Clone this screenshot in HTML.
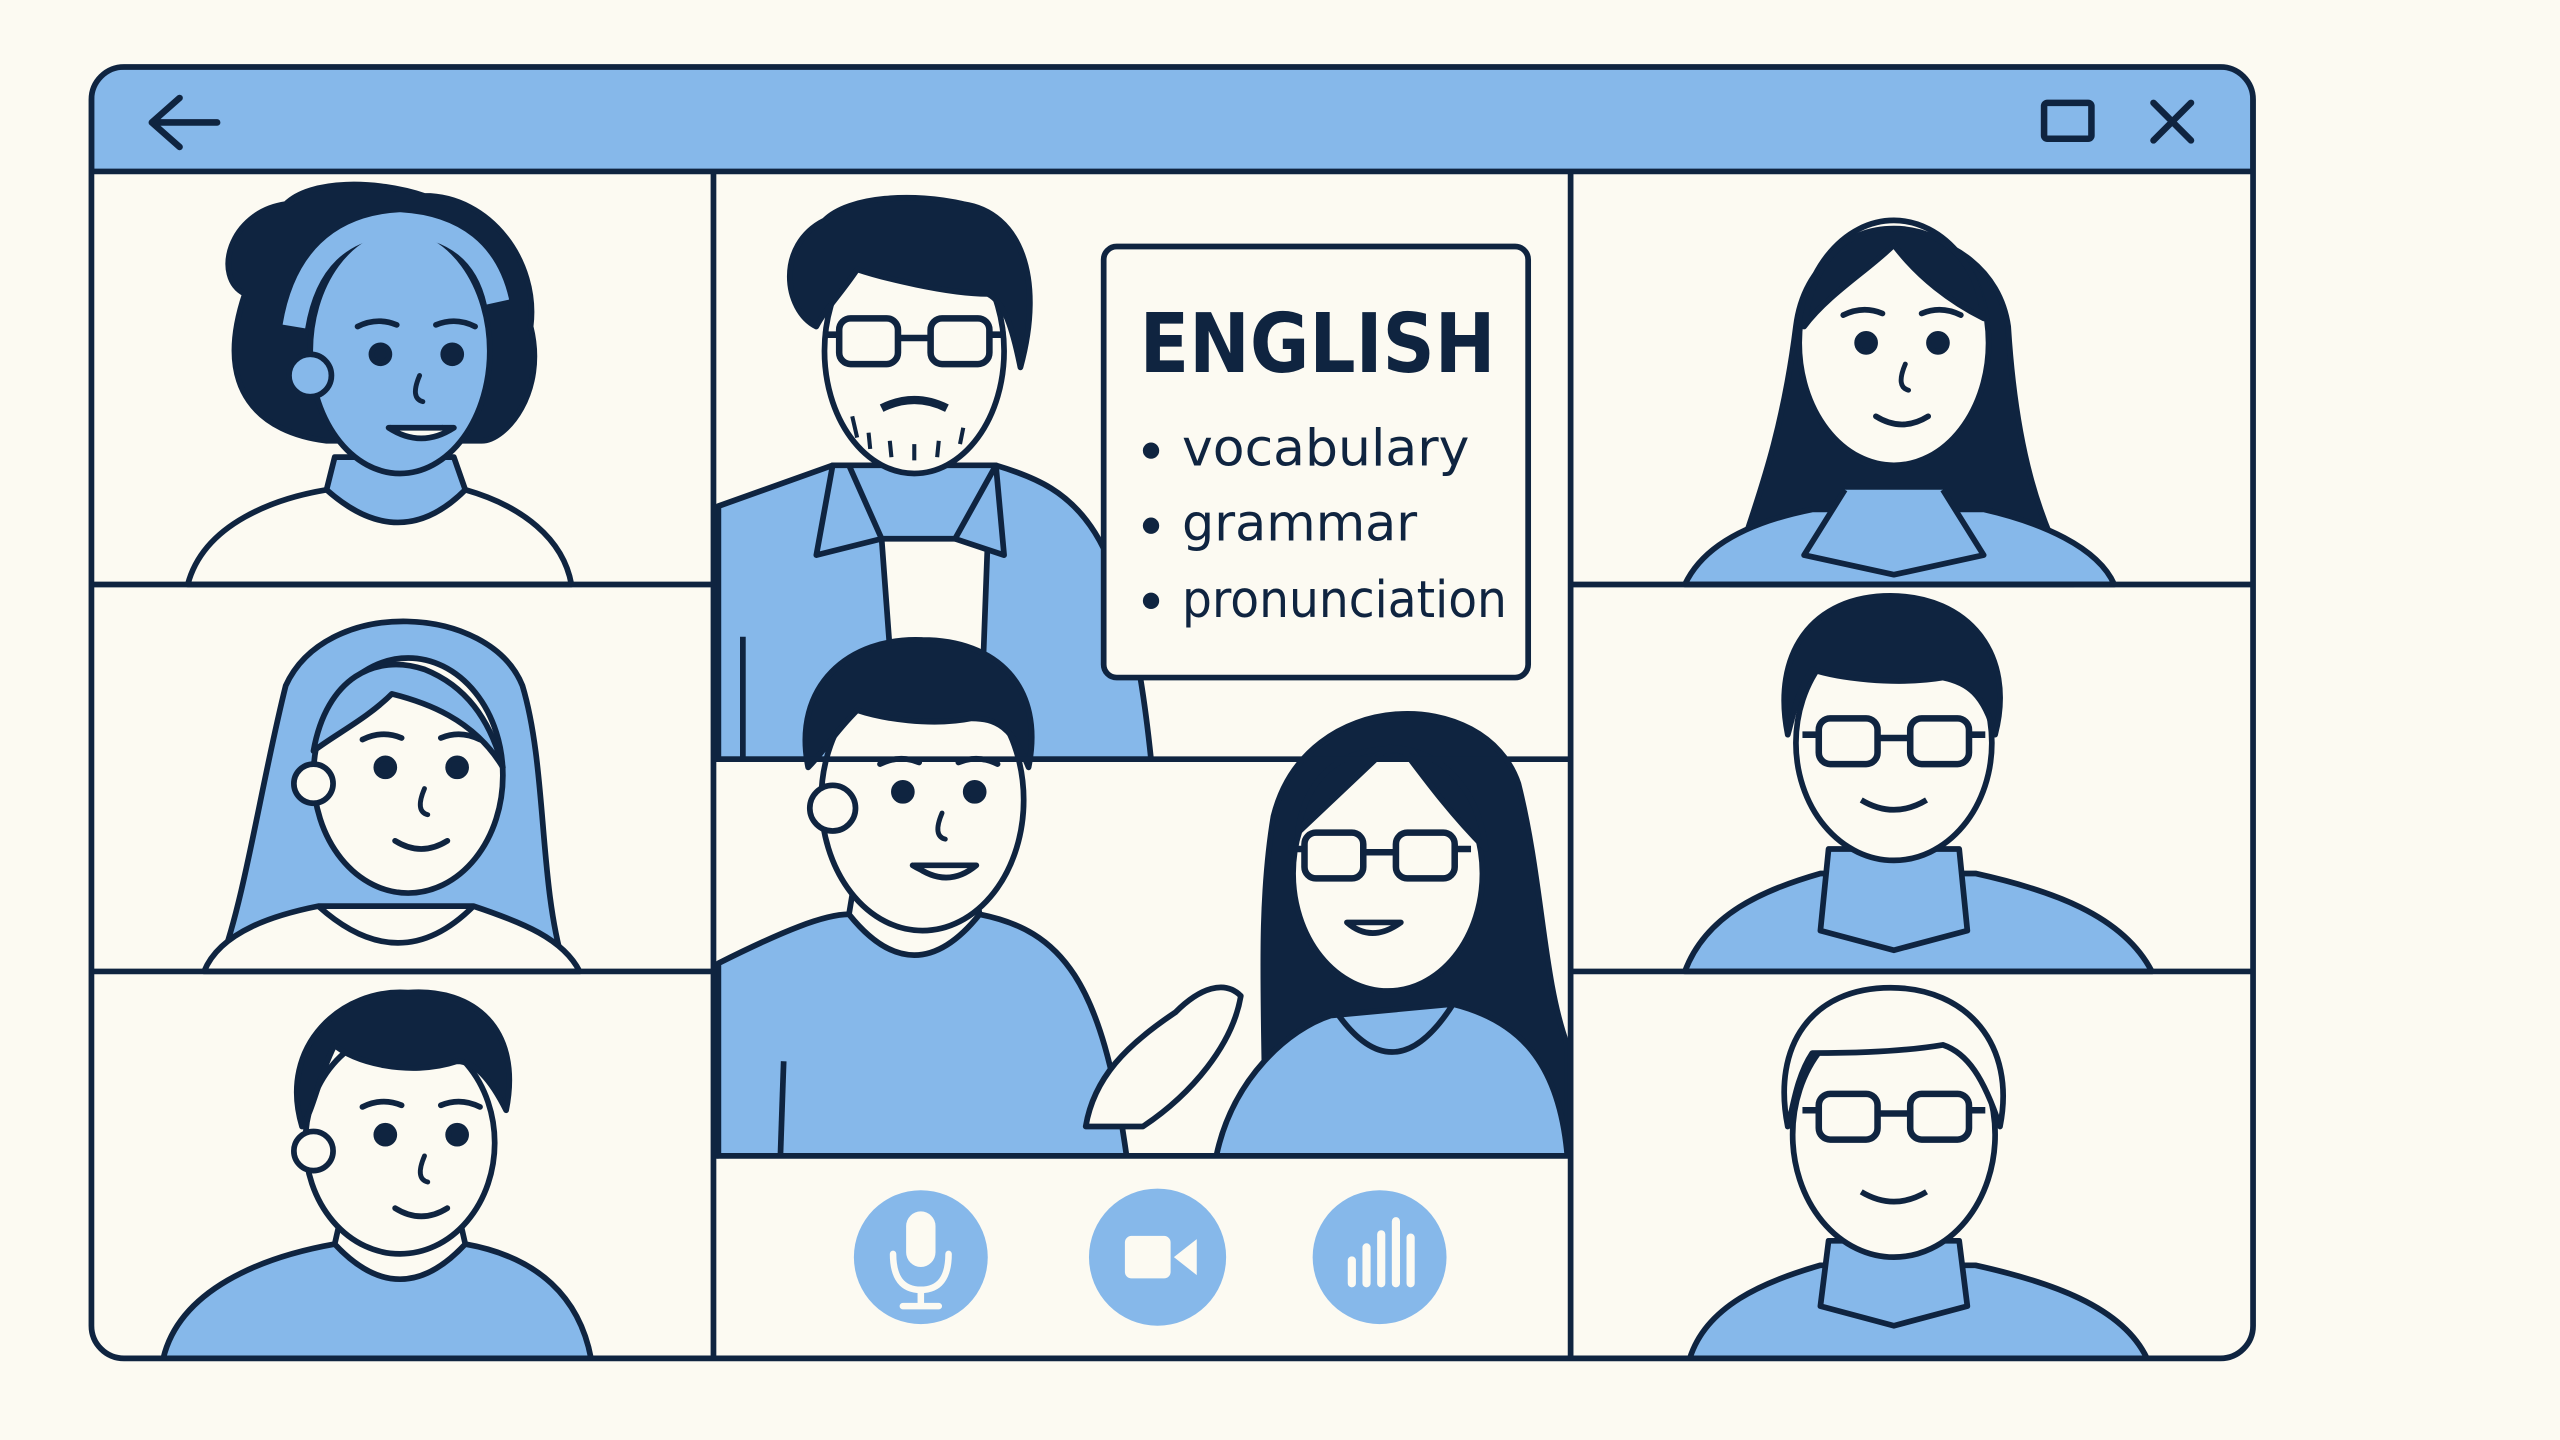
<!DOCTYPE html>
<html><head><meta charset="utf-8"><style>
html,body{margin:0;padding:0;background:#fcfaf2;}
svg{display:block;}
</style></head><body>
<svg width="2560" height="1440" viewBox="0 0 1568 882" xmlns="http://www.w3.org/2000/svg">
<defs>
<clipPath id="win"><rect x="56" y="41" width="1324" height="791" rx="20"/></clipPath>
<g id="face">
  <circle cx="-22" cy="-5" r="5.5" fill="#0f2440"/>
  <circle cx="22" cy="-5" r="5.5" fill="#0f2440"/>
  <path d="M-36 -22 Q-24 -28 -12 -23 M12 -23 Q24 -28 36 -22" stroke="#0f2440" stroke-width="3.5" fill="none" stroke-linecap="round"/>
  <path d="M2 8 Q-4 22 4 24" stroke="#0f2440" stroke-width="3" fill="none" stroke-linecap="round"/>
  <path d="M-16 40 Q0 50 16 40" stroke="#0f2440" stroke-width="3.5" fill="none" stroke-linecap="round"/>
</g>
<g id="glasses" fill="none" stroke="#0f2440" stroke-width="4">
  <rect x="-46" y="-20" width="36" height="28" rx="7"/>
  <rect x="10" y="-20" width="36" height="28" rx="7"/>
  <path d="M-10 -8 H10 M-46 -10 H-56 M46 -10 H56"/>
</g>
</defs>
<rect width="1568" height="882" fill="#fcfaf2"/>
<g clip-path="url(#win)" stroke="#0f2440" stroke-width="3.5" stroke-linejoin="round">
<rect x="56" y="41" width="1324" height="791" fill="#fcfaf2" stroke="none"/>

<!-- L1 woman curly -->
<path d="M115 358 C125 320 170 305 200 300 L285 300 C320 310 345 330 350 358 Z" fill="#fcfaf2"/>
<path d="M200 300 Q245 340 285 300 L278 280 L205 280 Z" fill="#86b8ea"/>
<path d="M150 180 C130 170 140 130 175 125 C190 110 230 110 260 120 C300 120 330 160 325 200 C335 240 310 270 295 270 L200 270 C160 265 130 240 150 180 Z" fill="#0f2440"/>
<ellipse cx="245" cy="215" rx="55" ry="75" fill="#86b8ea"/>
<path d="M180 200 Q190 140 245 137 Q295 140 305 185" fill="none" stroke="#86b8ea" stroke-width="14"/>
<circle cx="190" cy="230" r="13" fill="#86b8ea"/>
<use href="#face" x="255" y="222"/>
<path d="M238 262 Q258 275 278 262 Z" fill="#fcfaf2"/>

<!-- L2 woman blue hair -->
<path d="M175 420 C160 480 150 550 135 590 L205 590 L300 590 L345 590 C330 540 335 470 320 420 C300 370 200 365 175 420 Z" fill="#86b8ea"/>
<path d="M125 595 C135 570 170 560 195 555 L290 555 C320 565 345 575 355 595 Z" fill="#fcfaf2"/>
<path d="M195 555 Q245 600 290 555" fill="none"/>
<ellipse cx="250" cy="475" rx="58" ry="72" fill="#fcfaf2"/>
<path d="M192 460 C200 415 230 400 260 410 C285 420 300 440 308 470 C290 440 260 430 240 425 C225 440 205 450 192 460 Z" fill="#86b8ea"/>
<circle cx="192" cy="480" r="12" fill="#fcfaf2"/>
<use href="#face" x="258" y="475"/>

<!-- L3 boy -->
<path d="M100 832 C110 790 160 770 205 762 L285 762 C330 770 355 795 362 832 Z" fill="#86b8ea"/>
<path d="M205 762 Q245 805 285 762 L280 740 L210 740 Z" fill="#fcfaf2"/>
<ellipse cx="245" cy="700" rx="58" ry="68" fill="#fcfaf2"/>
<path d="M185 690 C170 640 210 605 250 608 C290 605 320 630 310 680 C300 660 290 650 280 650 C250 660 215 650 205 640 C195 660 192 680 185 690 Z" fill="#0f2440"/>
<circle cx="192" cy="705" r="12" fill="#fcfaf2"/>
<use href="#face" x="258" y="700"/>

<!-- Middle top man beard -->
<path d="M440 310 L510 285 L610 285 C660 300 690 320 705 465 L440 465 Z" fill="#86b8ea"/>
<path d="M540 330 L550 465 L600 465 L605 330 Z" fill="#fcfaf2"/>
<path d="M510 285 L500 340 L540 330 L520 285 Z M610 285 L615 340 L585 330 Z" fill="#86b8ea"/>
<path d="M455 390 L455 465" fill="none"/>
<ellipse cx="560" cy="215" rx="55" ry="75" fill="#fcfaf2"/>
<path d="M500 200 C480 190 475 150 505 135 C520 120 560 118 590 125 C625 130 640 170 625 225 C620 200 615 185 605 180 C580 180 540 170 525 165 C515 180 505 190 500 200 Z" fill="#0f2440"/>
<use href="#glasses" x="560" y="215"/>
<path d="M540 250 Q560 240 580 250" fill="none" stroke-width="5"/>
<path d="M522 255 L525 268 M532 265 L533 275 M545 270 L546 280 M560 272 L560 282 M575 270 L574 280 M590 262 L588 272" fill="none" stroke-width="2.5"/>

<!-- Middle mid: man -->
<path d="M440 590 C480 570 505 560 520 560 L600 560 C650 570 675 600 690 708 L440 708 Z" fill="#86b8ea"/>
<path d="M520 560 Q560 610 600 560 L595 530 L525 530 Z" fill="#fcfaf2"/>
<path d="M480 650 L478 708" fill="none"/>
<ellipse cx="565" cy="490" rx="62" ry="80" fill="#fcfaf2"/>
<path d="M495 470 C485 420 520 390 565 392 C610 392 640 420 630 470 C620 445 610 440 595 440 C570 445 540 440 525 435 C510 450 505 460 495 470 Z" fill="#0f2440"/>
<circle cx="510" cy="495" r="14" fill="#fcfaf2"/>
<use href="#face" x="575" y="490"/>
<path d="M560 530 Q580 545 598 530 Z" fill="#fcfaf2"/>
<!-- woman glasses -->
<path d="M780 500 C770 560 775 620 775 708 L960 708 L960 640 C945 600 945 540 930 480 C910 420 800 420 780 500 Z" fill="#0f2440"/>
<path d="M745 708 C755 660 790 630 815 622 L890 615 C930 625 955 650 960 708 Z" fill="#86b8ea"/>
<path d="M820 622 Q855 670 890 615" fill="none"/>
<ellipse cx="850" cy="535" rx="58" ry="72" fill="#fcfaf2"/>
<path d="M795 510 C800 470 830 455 860 460 C875 480 890 500 910 520 C905 480 880 458 850 458 Z" fill="#0f2440"/>
<use href="#glasses" x="845" y="530"/>
<path d="M825 565 Q840 578 858 565 Z" fill="#fcfaf2"/>
<path d="M665 690 C670 660 690 640 720 620 C735 605 750 600 760 610 C755 640 730 670 700 690 Z" fill="#fcfaf2"/>

<!-- English card -->
<rect x="676" y="151" width="260" height="264" rx="8" fill="#fcfaf2"/>

<!-- Controls -->
<rect x="440" y="708" width="522" height="124" fill="#fcfaf2" stroke="none"/>

<!-- R1 woman long hair -->
<path d="M1100 200 C1090 280 1070 320 1060 358 L1270 358 C1250 320 1235 280 1230 200 C1220 130 1110 120 1100 200 Z" fill="#0f2440"/>
<path d="M1032 358 C1045 330 1080 318 1110 312 L1215 312 C1250 320 1285 335 1295 358 Z" fill="#86b8ea"/>
<path d="M1130 300 L1105 340 L1160 352 L1215 340 L1190 300" fill="#86b8ea"/>
<ellipse cx="1160" cy="210" rx="58" ry="75" fill="#fcfaf2"/>
<path d="M1105 200 C1120 180 1145 165 1160 150 C1175 170 1195 185 1215 195 C1210 150 1180 140 1160 140 C1130 140 1110 160 1105 200 Z" fill="#0f2440"/>
<use href="#face" x="1165" y="215"/>

<!-- R2 man glasses -->
<path d="M1032 595 C1045 560 1080 545 1115 535 L1210 535 C1255 545 1300 560 1318 595 Z" fill="#86b8ea"/>
<path d="M1120 520 L1115 570 L1160 582 L1205 570 L1200 520 Z" fill="#86b8ea"/>
<ellipse cx="1160" cy="455" rx="60" ry="72" fill="#fcfaf2"/>
<path d="M1095 450 C1085 400 1110 365 1158 365 C1205 365 1235 400 1222 450 C1215 425 1205 418 1190 415 C1160 420 1125 415 1110 410 C1100 425 1098 440 1095 450 Z" fill="#0f2440"/>
<use href="#glasses" x="1160" y="460"/>
<path d="M1140 490 Q1160 502 1180 490" fill="none"/>

<!-- R3 older man -->
<path d="M1035 832 C1045 800 1080 785 1115 775 L1210 775 C1255 785 1300 800 1315 832 Z" fill="#86b8ea"/>
<path d="M1120 760 L1115 800 L1160 812 L1205 800 L1200 760 Z" fill="#86b8ea"/>
<ellipse cx="1160" cy="695" rx="62" ry="75" fill="#fcfaf2"/>
<path d="M1095 690 C1085 640 1110 605 1158 605 C1205 605 1235 640 1225 690 C1215 660 1205 645 1190 640 C1160 645 1125 645 1110 645 C1100 660 1098 680 1095 690 Z" fill="#fcfaf2"/>
<use href="#glasses" x="1160" y="690"/>
<path d="M1140 730 Q1160 742 1180 730" fill="none"/>

<!-- grid lines -->
<path d="M437 105 V832 M962 105 V832 M57 358 H437 M57 595 H437 M437 465 H962 M437 708 H962 M962 358 H1380 M962 595 H1380" fill="none" stroke-width="3.5"/>
<!-- title bar -->
<rect x="56" y="41" width="1324" height="64" fill="#86b8ea"/>
</g>
<rect x="56" y="41" width="1324" height="791" rx="20" fill="none" stroke="#0f2440" stroke-width="3.5"/>
<path d="M93 75 H133 M110 60 L93 75 L110 90" fill="none" stroke="#0f2440" stroke-width="4" stroke-linecap="round" stroke-linejoin="round"/>
<rect x="1252" y="63" width="29" height="22" rx="2" fill="none" stroke="#0f2440" stroke-width="4"/>
<path d="M1319 63 L1342 86 M1342 63 L1319 86" stroke="#0f2440" stroke-width="4" stroke-linecap="round"/>

<g font-family="DejaVu Sans, Liberation Sans, sans-serif" fill="#0f2440">
<text x="698" y="228" font-size="50" font-weight="bold" textLength="218" lengthAdjust="spacingAndGlyphs">ENGLISH</text>
<circle cx="705" cy="276" r="5"/><circle cx="705" cy="322" r="5"/><circle cx="705" cy="368" r="5"/>
<text x="724" y="285" font-size="31" textLength="176" lengthAdjust="spacingAndGlyphs">vocabulary</text>
<text x="724" y="331" font-size="31" textLength="144" lengthAdjust="spacingAndGlyphs">grammar</text>
<text x="724" y="378" font-size="31" textLength="199" lengthAdjust="spacingAndGlyphs">pronunciation</text>
</g>

<!-- control buttons -->
<circle cx="564" cy="770" r="41" fill="#86b8ea"/>
<rect x="555" y="742" width="18" height="34" rx="9" fill="#fcfaf2"/>
<path d="M547 768 Q547 790 564 790 Q581 790 581 768 M564 790 V800 M553 800 H575" fill="none" stroke="#fcfaf2" stroke-width="4" stroke-linecap="round"/>
<circle cx="709" cy="770" r="42" fill="#86b8ea"/>
<rect x="689" y="757" width="28" height="26" rx="4" fill="#fcfaf2"/>
<path d="M719 770 L733 759 V781 Z" fill="#fcfaf2"/>
<circle cx="845" cy="770" r="41" fill="#86b8ea"/>
<path d="M828 772 V786 M837 764 V786 M846 756 V786 M855 748 V786 M864 758 V786" stroke="#fcfaf2" stroke-width="5" stroke-linecap="round"/>
</svg>
</body></html>
